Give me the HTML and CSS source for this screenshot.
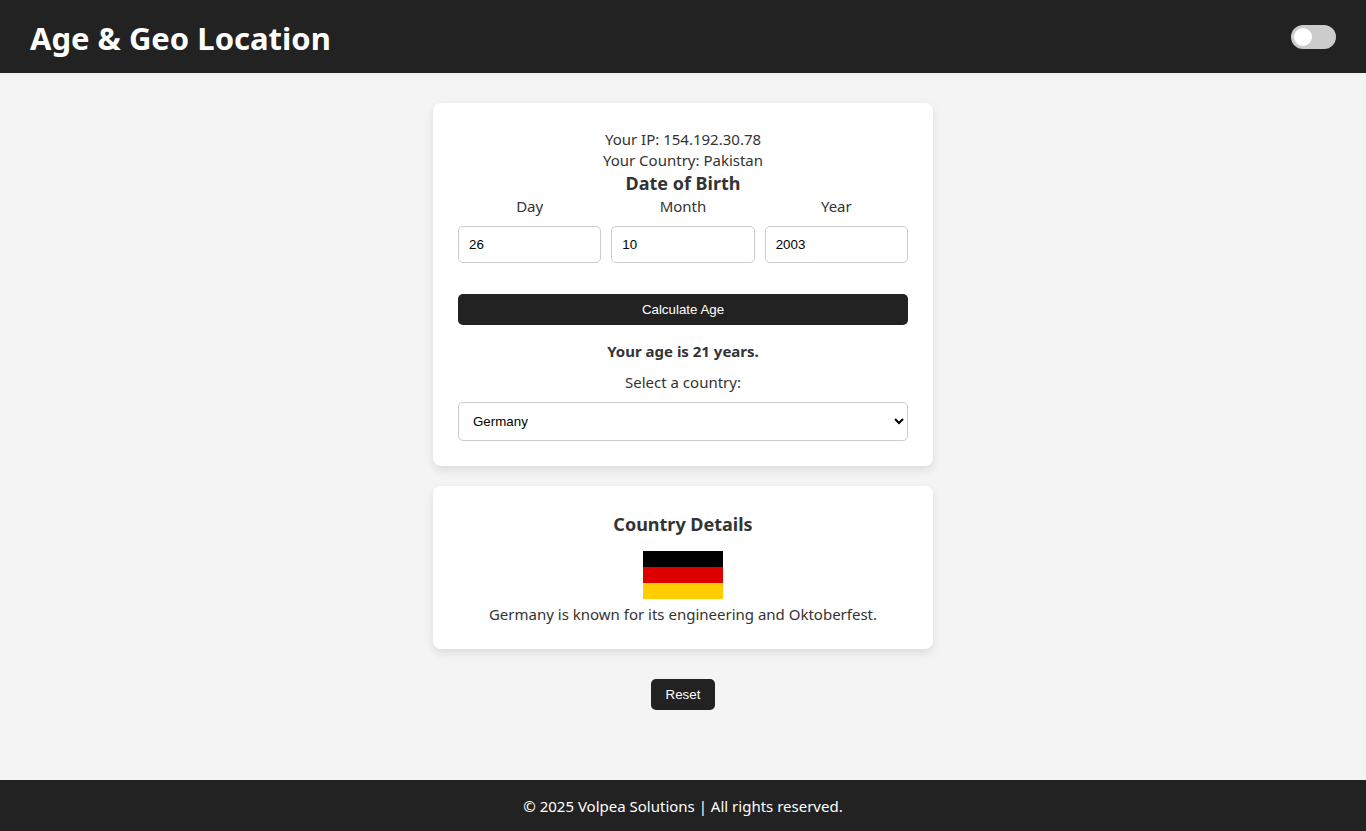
FILE: index.html
```html
<!DOCTYPE html>
<html lang="en">
<head>
<meta charset="UTF-8">
<meta name="viewport" content="width=device-width, initial-scale=1">
<title>Age &amp; Geo Location</title>
<link rel="stylesheet" href="styles.css">
</head>
<body>
<header class="site-header">
  <h1 class="site-title">Age &amp; Geo Location</h1>
  <label class="switch"><input class="switch-input" type="checkbox" aria-label="Dark mode"></label>
</header>
<main class="content">
  <section class="card">
    <p class="info">Your IP: 154.192.30.78</p>
    <p class="info">Your Country: Pakistan</p>
    <h2 class="card-title">Date of Birth</h2>
    <div class="date-row">
      <div class="field"><label for="day">Day</label><input class="control" id="day" type="text" inputmode="numeric" value="26"></div>
      <div class="field"><label for="month">Month</label><input class="control" id="month" type="text" inputmode="numeric" value="10"></div>
      <div class="field"><label for="year">Year</label><input class="control" id="year" type="text" inputmode="numeric" value="2003"></div>
    </div>
    <button class="button button-wide" type="button">Calculate Age</button>
    <p class="result">Your age is 21 years.</p>
    <label class="select-label" for="country">Select a country:</label>
    <select class="control select" id="country"><option>Germany</option></select>
  </section>
  <section class="card details">
    <h2 class="card-title">Country Details</h2>
    <svg class="flag" viewBox="0 0 80 48" role="img" aria-label="Flag of Germany">
      <rect width="80" height="16" fill="#000"/>
      <rect y="16" width="80" height="16" fill="#d00"/>
      <rect y="32" width="80" height="16" fill="#ffce00"/>
    </svg>
    <p class="info">Germany is known for its engineering and Oktoberfest.</p>
  </section>
  <button class="button reset" type="button">Reset</button>
</main>
<footer class="site-footer">© 2025 Volpea Solutions | All rights reserved.</footer>
</body>
</html>
```
FILE: styles.css
```css
* { box-sizing: border-box; margin: 0; padding: 0; }
body {
  min-height: 100vh;
  display: flex;
  flex-direction: column;
  background: #f4f4f4;
  color: #333;
  font: 15px/21px "Segoe UI", "Noto Sans", sans-serif;
}
.site-header {
  display: flex;
  justify-content: space-between;
  align-items: center;
  padding: 15px 30px;
  background: #222;
  color: #fff;
}
.site-title { padding-top: 3px; font-size: 31px; line-height: 40px; }
.switch { display: flex; }
.switch-input {
  appearance: none;
  width: 45px;
  height: 24px;
  padding: 3px;
  border-radius: 24px;
  background: #ccc;
  cursor: pointer;
}
.switch-input::before {
  content: "";
  display: block;
  width: 18px;
  height: 18px;
  border-radius: 50%;
  background: #fff;
}
.switch-input:checked::before { margin-left: auto; }
.content {
  flex: 1;
  display: flex;
  flex-direction: column;
  align-items: center;
  gap: 20px;
  padding: 30px 20px;
}
.card {
  width: 100%;
  max-width: 500px;
  padding: 26px 25px 25px;
  border-radius: 8px;
  background: #fff;
  box-shadow: 0 4px 10px rgba(0, 0, 0, 0.1);
  text-align: center;
}
.card-title { font-size: 18px; line-height: 25px; }
.date-row { display: flex; gap: 10px; }
.field { flex: 1; min-width: 0; }
.control {
  display: block;
  width: 100%;
  margin-top: 9px;
  padding: 10px;
  border: 1px solid #ccc;
  border-radius: 5px;
  background: #fff;
  color: #000;
  font-family: "Liberation Sans", Arial, sans-serif;
  line-height: 15px;
}
.select { height: 39px; }
.button {
  padding: 8px 15px;
  border: 0;
  border-radius: 5px;
  background: #222;
  color: #fff;
  font-family: "Liberation Sans", Arial, sans-serif;
  line-height: 15px;
  cursor: pointer;
}
.button-wide { display: block; width: 100%; margin-top: 31px; }
.result { margin: 16px 0 10px; font-weight: bold; }
.select-label { display: block; }
.details { padding-bottom: 24px; }
.flag { display: block; width: 80px; height: 48px; margin: 14px auto 5px; }
.reset { margin-top: 10px; }
.site-footer {
  padding: 16px 15px 14px;
  background: #222;
  color: #fff;
  text-align: center;
}
```
